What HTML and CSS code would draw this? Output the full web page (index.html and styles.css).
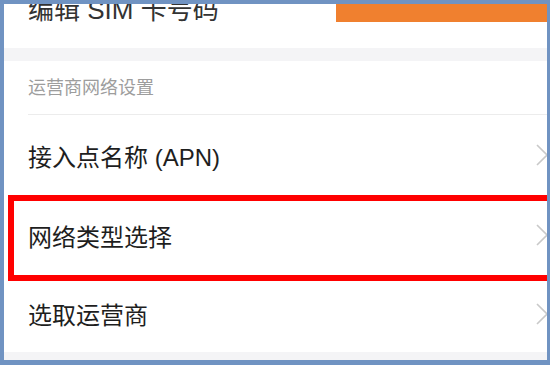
FILE: index.html
```
<!DOCTYPE html>
<html lang="zh-CN">
<head>
    <meta charset="UTF-8">
    <meta name="viewport" content="width=device-width, initial-scale=1.0">
    <title>运营商网络设置</title>
    <link rel="stylesheet" href="styles.css">
</head>
<body>
    <div class="frame">
        <div class="screen">
            <div class="top-row">
                <span class="top-title">编辑 SIM 卡号码</span>
                <div class="top-action"></div>
            </div>

            <div class="gap-band"></div>

            <div class="section-title">运营商网络设置</div>

            <div class="list-row">
                <span class="row-label">接入点名称 (APN)</span>
                <svg class="chevron" width="14" height="22" viewBox="0 0 14 22">
                    <polyline points="2,1 12,11 2,21" fill="none" stroke="#c9c9c9" stroke-width="1.6"/>
                </svg>
            </div>

            <div class="list-row highlighted">
                <span class="row-label">网络类型选择</span>
                <svg class="chevron" width="14" height="22" viewBox="0 0 14 22">
                    <polyline points="2,1 12,11 2,21" fill="none" stroke="#c9c9c9" stroke-width="1.6"/>
                </svg>
            </div>

            <div class="list-row last">
                <span class="row-label">选取运营商</span>
                <svg class="chevron" width="14" height="22" viewBox="0 0 14 22">
                    <polyline points="2,1 12,11 2,21" fill="none" stroke="#c9c9c9" stroke-width="1.6"/>
                </svg>
            </div>

            <div class="gap-band bottom"></div>
        </div>
    </div>
</body>
</html>
```

FILE: styles.css
```
* {
    margin: 0;
    padding: 0;
    box-sizing: border-box;
}

body {
    background-color: #7093c2;
    font-family: "Liberation Sans", "Noto Sans CJK SC", sans-serif;
    width: 550px;
    height: 365px;
    overflow: hidden;
}

.frame {
    padding: 4px 3px 5px 4px;
    height: 365px;
}

.screen {
    background-color: #ffffff;
    height: 356px;
    overflow: hidden;
    position: relative;
}

.top-row {
    display: flex;
    align-items: flex-start;
    justify-content: space-between;
    height: 44px;
    padding-left: 24px;
}

.top-title {
    font-size: 26px;
    line-height: 26px;
    color: #333333;
    margin-top: -7px;
}

.top-action {
    width: 211px;
    height: 18px;
    background-color: #f0802f;
}

.gap-band {
    height: 13px;
    background-color: #f4f4f6;
}

.gap-band.bottom {
    height: 8px;
}

.section-title {
    height: 54px;
    margin-left: 24px;
    padding-top: 15px;
    font-size: 18px;
    line-height: 24px;
    color: #9d9d9d;
    border-bottom: 1px solid #ececec;
}

.list-row {
    display: flex;
    align-items: center;
    justify-content: space-between;
    height: 80px;
    padding-left: 24px;
    position: relative;
}

.list-row.last {
    height: 77px;
}

.row-label {
    font-size: 24px;
    color: #1e1e1e;
}

.chevron {
    margin-right: -2px;
}

.list-row.highlighted::after {
    content: "";
    position: absolute;
    top: 0;
    left: 4px;
    right: -8px;
    bottom: -6px;
    border: 6px solid #ff0000;
}
```
